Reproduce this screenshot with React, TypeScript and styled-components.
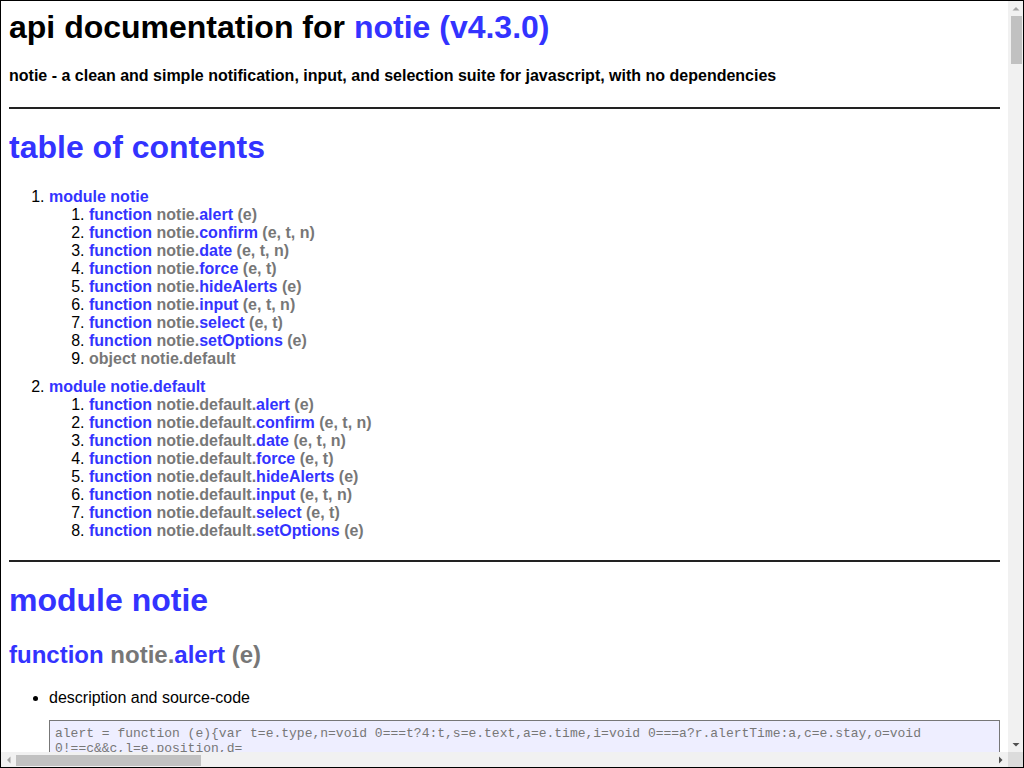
import styled, { createGlobalStyle } from 'styled-components'

const GlobalStyle = createGlobalStyle`
  html, body {
    margin: 0;
    padding: 0;
    background: #fff;
    overflow: hidden;
  }
`

// browser-like window: page viewport plus classic scrollbars
const Frame = styled.div`
  box-sizing: border-box;
  width: 1024px;
  height: 768px;
  border: 1px solid #000;
  display: grid;
  grid-template-columns: 1fr 15px;
  grid-template-rows: 1fr 15px;
  overflow: hidden;
  background: #fff;
`

const Viewport = styled.div`
  min-width: 0;
  min-height: 0;
  overflow: hidden;
`

const Track = styled.div<{ $vertical?: boolean }>`
  display: flex;
  flex-direction: ${(p) => (p.$vertical ? 'column' : 'row')};
  align-items: center;
  background: #f1f1f1;
`

const Arrow = styled.div`
  flex: 0 0 15px;
  width: 15px;
  height: 15px;
  display: flex;
  align-items: center;
  justify-content: center;
`

const Thumb = styled.div<{ $vertical?: boolean; $size: number }>`
  flex: 0 0 ${(p) => p.$size}px;
  ${(p) => (p.$vertical ? 'width: 11px; margin-left: 1px;' : 'height: 11px; margin-top: 1px;')}
  background: #c1c1c1;
`

const Spacer = styled.div`
  flex: 1;
`

const Corner = styled.div`
  background: #dcdcdc;
`

const Doc = styled.div`
  padding: 0 8px;
  color: #000;
  font-family: "Liberation Sans", Arial, sans-serif;
  font-size: 16px;
`

const Title = styled.h1`
  margin: 8px 0 0;
  font-size: 32px;
  font-weight: bold;
`

const Heading = styled.h1`
  margin: 0;
  font-size: 32px;
  font-weight: bold;
  color: #33f;
`

const SubHeading = styled.h2`
  margin: 22px 0 0;
  font-size: 24px;
  font-weight: bold;
`

const Tagline = styled.h4`
  margin: 21px 0 0;
  font-size: 16px;
  font-weight: bold;
`

const Rule = styled.hr<{ $top: number }>`
  height: 0;
  margin: ${(p) => p.$top}px 0 20px;
  border: none;
  border-top: 2px solid #222;
`

const Link = styled.a`
  color: #33f;
  text-decoration: none;
  cursor: pointer;
`

const Sig = styled.span`
  color: #777;
`

const Toc = styled.ol`
  margin: 22px 0 0;
  padding-left: 40px;
`

const ModuleItem = styled.li`
  & + & {
    margin-top: 10px;
  }
`

const Entry = styled.span`
  font-weight: bold;
`

const SubList = styled.ol`
  margin: 0;
  padding-left: 40px;
`

const Bullets = styled.ul`
  margin: 20px 0 0;
  padding-left: 40px;
`

const Source = styled.pre`
  margin: 13px 0 0;
  padding: 5px;
  border: 1px solid #777;
  background: #eef;
  color: #777;
  font-family: "Liberation Mono", "Courier New", monospace;
  font-size: 13px;
  white-space: pre-wrap;
`

type Fn = { name: string; args: string }

const functions: Fn[] = [
  { name: 'alert', args: '(e)' },
  { name: 'confirm', args: '(e, t, n)' },
  { name: 'date', args: '(e, t, n)' },
  { name: 'force', args: '(e, t)' },
  { name: 'hideAlerts', args: '(e)' },
  { name: 'input', args: '(e, t, n)' },
  { name: 'select', args: '(e, t)' },
  { name: 'setOptions', args: '(e)' },
]

const alertSource =
  'alert = function (e){var t=e.type,n=void 0===t?4:t,s=e.text,a=e.time,i=void 0===a?r.alertTime:a,c=e.stay,o=void 0!==c&&c,l=e.position,d=\n' +
  'l;blur();hideAlerts();u=document.createElement("div");u.id=r.ids.alert;' +
  'u.classList.add(r.classes.container);u.classList.add(r.classes.alertTypes[n]);u.classList.add(r.classes.position[l]);' +
  'u.style.textAlign=r.alignment;u.style.transition=r.transitionCurve;u.style.zIndex=r.zIndex;u.onclick=removeAlert;' +
  'f=document.createElement("div");f.classList.add(r.classes.textbox);m=document.createElement("div");' +
  'm.classList.add(r.classes.textboxInner);m.innerHTML=escapeHtml(s);f.appendChild(m);u.appendChild(f);' +
  'document.body.appendChild(u);addToDocument(u,l);setTimeout(hideAlerts,i*1e3);u.dataset.stay=o;' +
  'window.addEventListener("keydown",onKeydown);}\n' +
  '    return o||setTimeout(function (){removeFromDocument(r.ids.alert,d)},i*1e3)\n' +
  '}'

function Triangle({ dir, dark }: { dir: 'up' | 'down' | 'left' | 'right'; dark?: boolean }) {
	const points = {
		up: '0.5,4.5 4,1 7.5,4.5',
		down: '0.5,1 4,4.5 7.5,1',
		left: '4.5,0.5 1,4 4.5,7.5',
		right: '1,0.5 4.5,4 1,7.5',
	}[dir]
	const wide = dir === 'up' || dir === 'down'
	return (
		<svg width={wide ? 8 : 6} height={wide ? 6 : 8} viewBox={wide ? '0 0 8 6' : '0 0 6 8'}>
			<polygon points={points} fill={dark ? '#505050' : '#a3a3a3'} />
		</svg>
	)
}

function FnEntry({ prefix, fn }: { prefix: string; fn: Fn }) {
	return (
		<Entry>
			<Link href={`#apidoc.element.${prefix}${fn.name}`}>function</Link>{' '}
			<Sig>{prefix}</Sig>
			<Link href={`#apidoc.element.${prefix}${fn.name}`}>{fn.name}</Link>{' '}
			<Sig>{fn.args}</Sig>
		</Entry>
	)
}

function App() {
	return (
		<Frame>
			<GlobalStyle />
			<Viewport>
				<Doc>
					<Title>
						api documentation for <Link href="#">notie (v4.3.0)</Link>
					</Title>
					<Tagline>
						notie - a clean and simple notification, input, and selection suite for javascript, with no dependencies
					</Tagline>
					<Rule $top={22} />
					<Heading>table of contents</Heading>
					<Toc>
						<ModuleItem>
							<Entry><Link href="#apidoc.module.notie">module notie</Link></Entry>
							<SubList>
								{functions.map((fn) => (
									<li key={fn.name}><FnEntry prefix="notie." fn={fn} /></li>
								))}
								<li><Entry><Sig>object notie.default</Sig></Entry></li>
							</SubList>
						</ModuleItem>
						<ModuleItem>
							<Entry><Link href="#apidoc.module.notie.default">module notie.default</Link></Entry>
							<SubList>
								{functions.map((fn) => (
									<li key={fn.name}><FnEntry prefix="notie.default." fn={fn} /></li>
								))}
							</SubList>
						</ModuleItem>
					</Toc>
					<Rule $top={20} />
					<Heading>module notie</Heading>
					<SubHeading>
						<FnEntry prefix="notie." fn={functions[0]} />
					</SubHeading>
					<Bullets>
						<li>
							description and source-code
							<Source>{alertSource}</Source>
						</li>
					</Bullets>
				</Doc>
			</Viewport>
			<Track $vertical>
				<Arrow><Triangle dir="up" /></Arrow>
				<Thumb $vertical $size={48} />
				<Spacer />
				<Arrow><Triangle dir="down" dark /></Arrow>
			</Track>
			<Track>
				<Arrow><Triangle dir="left" /></Arrow>
				<Thumb $size={185} />
				<Spacer />
				<Arrow><Triangle dir="right" dark /></Arrow>
			</Track>
			<Corner />
		</Frame>
	)
}

export default App
